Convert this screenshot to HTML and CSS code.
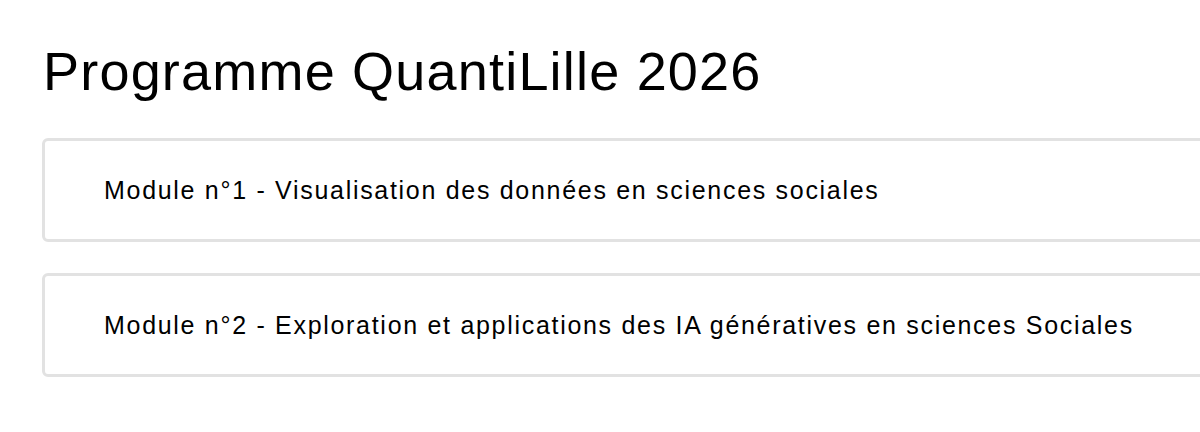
FILE: index.html
```html
<!DOCTYPE html>
<html>
	<head>
		<title>Programme QuantiLille 2026</title>
		<meta charset="utf-8">
		<link rel="stylesheet" href="styles.css">
	</head>
	<body>
		<main>
			<h1>Programme QuantiLille 2026</h1>
			<div class="modules">
				<div class="module">
					<p>Module n°1 - Visualisation des données en sciences sociales</p>
				</div>
				<div class="module">
					<p>Module n°2 - Exploration et applications des IA génératives en sciences Sociales</p>
				</div>
			</div>
		</main>
	</body>
</html>
```

FILE: styles.css
```css
*{
	margin:0;
	padding:0;
	box-sizing:border-box;
}
body{
	background-color:#fff;
	color:#000;
	font-family:"Liberation Sans", Arial, sans-serif;
	overflow:hidden;
}
main{
	padding:41px 0 0 42px;
	width:1220px;
}
h1{
	font-size:54px;
	font-weight:normal;
	letter-spacing:1.2px;
	line-height:60px;
	margin-left:1px;
	margin-bottom:37px;
}
.modules{
	display:flex;
	flex-direction:column;
	gap:31px;
}
.module{
	border:3px solid #e2e2e2;
	border-radius:6px;
	height:104px;
	display:flex;
	align-items:center;
	padding-left:59px;
}
.module p{
	font-size:25px;
	letter-spacing:1.7px;
}
```
